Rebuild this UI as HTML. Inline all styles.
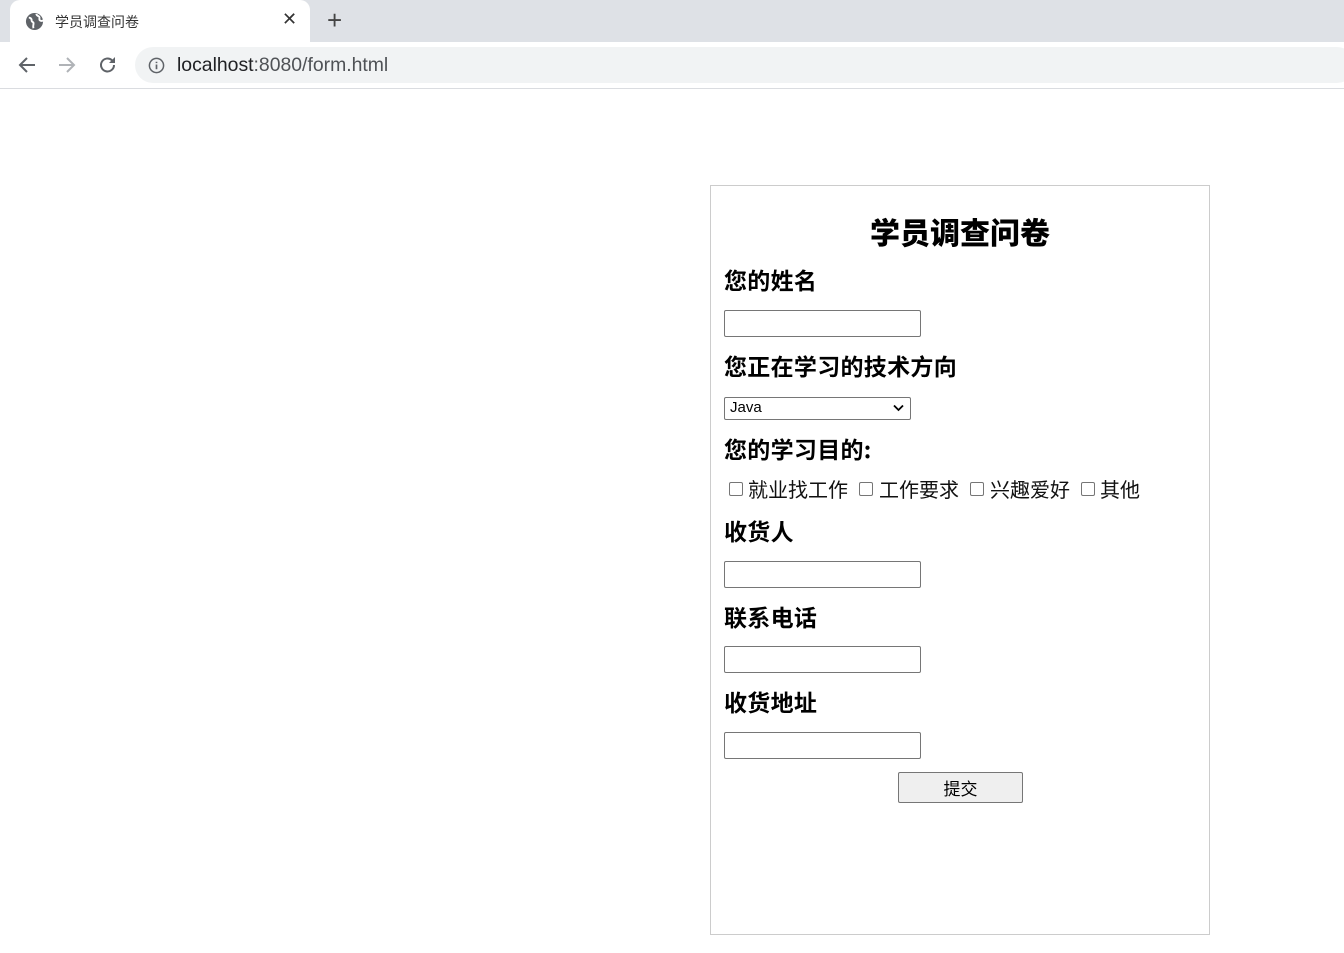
<!DOCTYPE html>
<html><head><meta charset="utf-8"><style>
*{margin:0;padding:0;box-sizing:border-box}
body{width:1344px;height:953px;background:#fff;font-family:"Liberation Sans","Noto Sans CJK SC",sans-serif;position:relative;overflow:hidden}
.a{position:absolute}
.lbl{position:absolute;left:724px;font-size:23px;letter-spacing:0.3px;font-weight:bold;color:#000;line-height:26px;font-family:"Noto Sans CJK SC",sans-serif;margin-top:-2px}
.inp{position:absolute;left:724px;width:197px;height:27px;border:1px solid #767676;border-radius:2px;background:#fff}
.cb{position:absolute;top:482px;width:14px;height:14px;border:1px solid #767676;border-radius:2px}
.ct{position:absolute;top:476px;font-size:20px;line-height:26px;font-family:'Noto Sans CJK SC',sans-serif;color:#111}
</style></head><body>
<div class="a" style="left:0;top:0;width:1344px;height:42px;background:#dee1e6"></div>
<div class="a" style="left:10px;top:0;width:300px;height:44px;background:#fff;border-radius:10px 10px 0 0"></div>
<svg class="a" style="left:25px;top:12px" width="19" height="19" viewBox="0 0 20 20"><circle cx="10" cy="10" r="9" fill="#5f6368"/><path d="M4 6c2 0 3 1 3 3s2 1 2 3-1 3 0 5M12 2c0 2 2 2 3 3s-1 3 1 4 2 0 3 0" stroke="#fff" stroke-width="2" fill="none"/></svg>
<div class="a" style="left:55px;top:12px;font-size:14px;color:#333;font-family:'Noto Sans CJK SC',sans-serif;line-height:20px">学员调查问卷</div>
<div class="a" style="left:282px;top:9px;font-size:18px;color:#333">✕</div>
<div class="a" style="left:327px;top:5px;font-size:26px;color:#444;line-height:30px">+</div>
<div class="a" style="left:0;top:88px;width:1344px;height:1px;background:#dadce0"></div>
<svg class="a" style="left:16px;top:54px" width="22" height="22" viewBox="0 0 22 22"><path d="M19 11H4M11 4l-7 7 7 7" stroke="#5f6368" stroke-width="2" fill="none"/></svg>
<svg class="a" style="left:56px;top:54px" width="22" height="22" viewBox="0 0 22 22"><path d="M3 11h15M11 4l7 7-7 7" stroke="#b0b3b7" stroke-width="2" fill="none"/></svg>
<svg class="a" style="left:97px;top:54px" width="22" height="22" viewBox="0 0 22 22"><path d="M17 11a6.5 6.5 0 1 1-2-4.7" stroke="#5f6368" stroke-width="2" fill="none"/><path d="M18 3v6h-6z" fill="#5f6368"/></svg>
<div class="a" style="left:135px;top:47px;width:1220px;height:36px;background:#f1f3f4;border-radius:18px"></div>
<svg class="a" style="left:148px;top:57px" width="17" height="17" viewBox="0 0 18 18"><circle cx="9" cy="9" r="7.5" stroke="#5f6368" stroke-width="1.6" fill="none"/><path d="M9 8v5M9 5v1.5" stroke="#5f6368" stroke-width="1.8"/></svg>
<div class="a" style="left:177px;top:53px;font-size:19.4px;line-height:24px;color:#202124">localhost<span style="color:#4f5256">:8080/form.html</span></div>

<div class="a" style="left:710px;top:185px;width:500px;height:750px;border:1px solid #ccc"></div>
<div class="a" style="left:710px;width:500px;top:212px;text-align:center;font-size:30px;font-weight:900;line-height:38px;font-family:'Noto Sans CJK SC',sans-serif">学员调查问卷</div>
<div class="lbl" style="top:268px">您的姓名</div>
<div class="inp" style="top:310px"></div>
<div class="lbl" style="top:354px">您正在学习的技术方向</div>
<div class="a" style="left:724px;top:397px;width:187px;height:23px;border:1px solid #767676;border-radius:2px;font-size:15px;line-height:20px;padding-left:5px">Java
<svg class="a" style="right:6px;top:6px" width="11" height="8" viewBox="0 0 11 8"><path d="M1 1.5l4.5 4.5 4.5-4.5" stroke="#000" stroke-width="1.8" fill="none"/></svg></div>
<div class="lbl" style="top:437px">您的学习目的:</div>
<div class="cb" style="left:729px"></div><div class="ct" style="left:748px">就业找工作</div>
<div class="cb" style="left:859px"></div><div class="ct" style="left:879px">工作要求</div>
<div class="cb" style="left:970px"></div><div class="ct" style="left:990px">兴趣爱好</div>
<div class="cb" style="left:1081px"></div><div class="ct" style="left:1100px">其他</div>
<div class="lbl" style="top:519px">收货人</div>
<div class="inp" style="top:561px"></div>
<div class="lbl" style="top:605px">联系电话</div>
<div class="inp" style="top:646px"></div>
<div class="lbl" style="top:690px">收货地址</div>
<div class="inp" style="top:732px"></div>
<div class="a" style="left:898px;top:772px;width:125px;height:31px;background:#efefef;border:1px solid #767676;border-radius:2px;text-align:center;font-size:17px;line-height:29px;font-family:'Noto Sans CJK SC',sans-serif">提交</div>
</body></html>
